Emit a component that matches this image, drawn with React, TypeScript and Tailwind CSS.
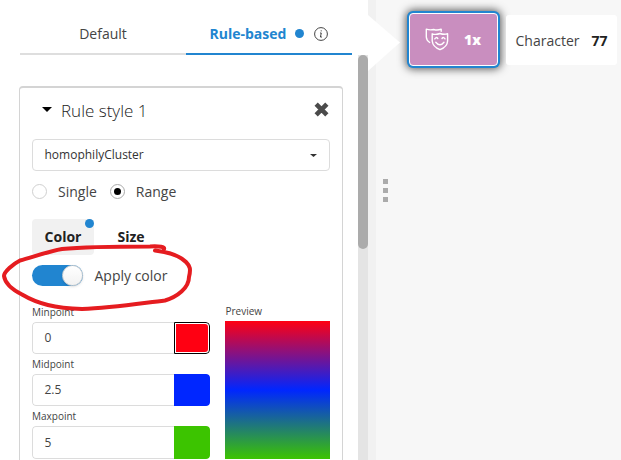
import React from "react";

type PointProps = { label: string; value: string; swatch: string; focused?: boolean; tall?: boolean };

function PointField({ label, value, swatch, focused, tall }: PointProps) {
  return (
    <label className="block">
      <span className="block h-5 pt-[3px] text-[10px] leading-[14px]">{label}</span>
      <span className={`flex w-[178px] overflow-hidden rounded ${tall ? "h-[33px]" : "h-8"}`}>
        <span className="flex grow items-center rounded-l border border-r-0 border-[#dcdcdc] pl-[11.5px] text-[12px]">{value}</span>
        <span className={`w-9 rounded-r ${focused ? "border border-black p-px" : ""}`}>
          <span className={`block size-full rounded-r-[3px] ${swatch}`} />
        </span>
      </span>
    </label>
  );
}

function Radio({ label, checked }: { label: string; checked?: boolean }) {
  return (
    <span className="flex items-center text-[14px]">
      <span className={`flex size-[15px] items-center justify-center rounded-full border ${checked ? "border-[#aaa]" : "border-[#d0d0d0]"}`}>
        {checked && <span className="size-[7px] rounded-full bg-black" />}
      </span>
      <span className="ml-[11px]">{label}</span>
    </span>
  );
}

function Masks() {
  return (
    <svg className="ml-[15px] h-[23px] w-6" viewBox="0 0 24 23" fill="none" stroke="white" strokeWidth="1.4" strokeLinecap="round" strokeLinejoin="round">
      <path d="M7.2 5.8Q11 7 15 5.5Q19 7 22.6 5.7V13Q22.3 18.8 15 21.7Q7.8 18.8 7.2 13Z" />
      <path d="M4.7 14.5Q1.5 12.5 1.3 9V1.2Q5 2.4 8.7 1.5Q12.5 2.7 16.2 1.2V3.2" />
      <path d="M9.8 10.8Q11.2 8.5 12.8 10.5M17 10.5Q18.5 8.5 20 10.8M10.8 14.2Q15 19.4 19 14.2" />
    </svg>
  );
}

export default function App() {
  return (
    <div className="relative flex h-[460px] w-[621px] overflow-hidden bg-[#f7f7f7] font-['Open_Sans',sans-serif] text-[#444]">
      <aside className="flex w-[368px] shrink-0 flex-col bg-white">
        <nav className="ml-5 flex h-[55px] w-[332px] shrink-0 text-[14px]">
          <div className="flex w-[166px] items-center justify-center border-b-2 border-[#dedede] pt-[14px]">Default</div>
          <div className="flex w-[166px] items-center border-b-2 border-[#2185d0] pt-[14px] pl-[23.5px] font-bold text-[#2185d0]">
            <span className="w-[77px] whitespace-nowrap">Rule-based</span>
            <span className="ml-2 size-[9px] rounded-full bg-[#2185d0]" />
            <svg className="ml-[10px] size-[14px] text-[#444]" viewBox="0 0 14 14" fill="none" stroke="currentColor">
              <circle cx="7" cy="7" r="6.4" />
              <path d="M6 6H7.3L6.4 10H8M7.2 3.3V4.4" />
            </svg>
          </div>
        </nav>
        <div className="flex min-h-0 grow justify-between">
          <section className="mt-[31px] ml-[19px] h-[420px] w-[324px] shrink-0 rounded border border-t-2 border-[#d4d4d4] px-3">
            <header className="flex h-[51px] items-center pb-[5px]">
              <svg className="mb-1 ml-[10px] h-[5px] w-[10px] fill-black" viewBox="0 0 10 5"><path d="M0 0H10L5 5Z" /></svg>
              <h1 className="ml-[9px] text-[17px] font-light text-[#222]">Rule style 1</h1>
              <svg className="mr-px mb-1 ml-auto size-[15px]" viewBox="0 0 14 14" stroke="#4b4b4b" strokeWidth="4.3"><path d="M2 2L12 12M12 2L2 12" /></svg>
            </header>
            <div className="flex h-8 items-center justify-between rounded border border-[#dcdcdc] pr-3 pl-[11.5px] text-[12px] text-[#333]">
              homophilyCluster
              <svg className="mt-px h-[3px] w-[7px] fill-[#333]" viewBox="0 0 7 3"><path d="M0 0H7L3.5 3Z" /></svg>
            </div>
            <div className="mt-[9px] flex h-[22px] items-center gap-[13px]">
              <Radio label="Single" />
              <Radio label="Range" checked />
            </div>
            <div className="mt-[17px] flex h-9 text-[14px] font-bold text-[#222]">
              <div className="relative flex w-[62px] items-center justify-center rounded bg-[#f1f1f1] pb-[2px]">
                Color
                <span className="absolute top-0 right-0 size-[9px] rounded-full bg-[#2185d0]" />
              </div>
              <div className="flex w-[74px] items-center justify-center pb-[2px]">Size</div>
            </div>
            <div className="mt-[10px] flex h-[21px] items-center text-[14px]">
              <span className="flex h-[21px] w-[51px] justify-end rounded-full bg-[#2185d0]">
                <span className="size-[21px] rounded-full border border-[#d2d2d2] bg-linear-to-b from-white to-[#f2f2f2] shadow-sm" />
              </span>
              <span className="ml-[11.5px]">Apply color</span>
            </div>
            <div className="mt-4 flex gap-[15px]">
              <div>
                <PointField label="Minpoint" value="0" swatch="bg-[#ff0012]" focused />
                <PointField label="Midpoint" value="2.5" swatch="bg-[#0026ff]" />
                <PointField label="Maxpoint" value="5" swatch="bg-[#3cc400]" tall />
              </div>
              <div className="w-[105px]">
                <div className="h-[19px] pt-0.5 pl-[0.5px] text-[10px] leading-[14px]">Preview</div>
                <div className="h-[138px] bg-linear-to-b/srgb from-[#ff0012] via-[#0026ff] to-[#3cc400]" />
              </div>
            </div>
          </section>
          <div className="w-[10px] bg-[#e4e4e4]"><div className="h-[194px] rounded-full bg-[#ababab]" /></div>
        </div>
      </aside>
      <div className="w-2 shrink-0 bg-[#f1f1f1]" />
      <main className="flex grow flex-col">
        <div className="mt-[13px] ml-[33px] flex items-start">
          <div className="flex h-[53px] w-[89px] items-center rounded border border-white bg-[#c98ebf] shadow-[0_0_0_2px_#2185d0,0_0_9px_3px_#555]">
            <Masks />
            <strong className="ml-[15px] text-[14px] font-extrabold text-white">1x</strong>
          </div>
          <div className="mt-0.5 ml-2 flex h-[50px] w-[111px] items-center rounded-[3px] bg-white pl-[9.5px] text-[14px]">
            Character<strong className="ml-3 text-[#222]">77</strong>
          </div>
        </div>
        <div className="mt-[113px] ml-[7px] flex w-[5px] flex-col gap-1">
          <i className="h-[5px] bg-[#ababab]" /><i className="h-[5px] bg-[#ababab]" /><i className="h-[5px] bg-[#ababab]" />
        </div>
      </main>
      <svg className="absolute top-[15px] left-[368px] h-[56px] w-8 fill-white" viewBox="0 0 32 56"><path d="M0 0L32 27.5L0 56Z" /></svg>
      <svg className="pointer-events-none absolute top-[240px] left-0 h-[72px] w-[200px]" viewBox="0 0 200 72" fill="none" stroke="#e51c20" strokeWidth="4" strokeLinecap="round" strokeLinejoin="round">
        <path d="M164 9C165 7 160 6 150 6.5C130 6.5 82 7 62 9C46 12 33 17 20 20.5C13 24 4 32 4 36C5 43 13 50 22 54.5C38 64 55 68 82 69C112 68 143 63 165 60.5C177 57 189 48 189 37C191 29 190 26 186 22C179 15 168 12 155 10.5" />
      </svg>
    </div>
  );
}
